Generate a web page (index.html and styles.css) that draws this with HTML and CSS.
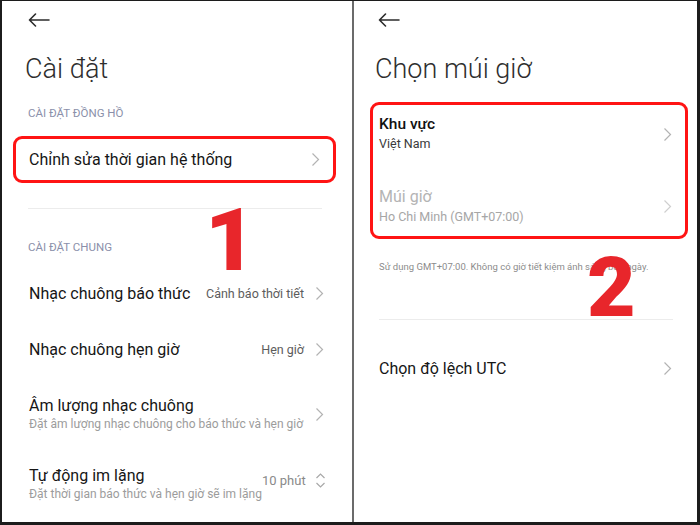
FILE: index.html
```html
<!DOCTYPE html>
<html lang="vi">
<head>
<meta charset="utf-8">
<link rel="stylesheet" href="styles.css">
</head>
<body>
<div class="frame">
  <section class="panel panel-left">
    <div class="topbar">
      <svg class="back" width="22" height="14" viewBox="0 0 22 14"><path d="M1.5 7H21M7.5 1L1.5 7L7.5 13" fill="none" stroke="#2b2b2b" stroke-width="1.6" stroke-linecap="round" stroke-linejoin="round"/></svg>
    </div>
    <h1 class="title">Cài đặt</h1>
    <div class="section-label first">CÀI ĐẶT ĐỒNG HỒ</div>
    <div class="mark-box mark-left">
      <div class="row row-boxed">
        <span class="row-title">Chỉnh sửa thời gian hệ thống</span>
        <svg class="chev" width="9" height="15" viewBox="0 0 9 15"><path d="M1.5 1.5L7.5 7.5L1.5 13.5" fill="none" stroke="#b3b3b3" stroke-width="1.2"/></svg>
      </div>
    </div>
    <div class="divider divider-left"></div>
    <div class="section-label second">CÀI ĐẶT CHUNG</div>
    <div class="list">
      <div class="row row-single">
        <span class="row-title">Nhạc chuông báo thức</span>
        <span class="row-end"><span class="row-value">Cảnh báo thời tiết</span><svg class="chev" width="9" height="15" viewBox="0 0 9 15"><path d="M1.5 1.5L7.5 7.5L1.5 13.5" fill="none" stroke="#b3b3b3" stroke-width="1.2"/></svg></span>
      </div>
      <div class="row row-single">
        <span class="row-title">Nhạc chuông hẹn giờ</span>
        <span class="row-end"><span class="row-value">Hẹn giờ</span><svg class="chev" width="9" height="15" viewBox="0 0 9 15"><path d="M1.5 1.5L7.5 7.5L1.5 13.5" fill="none" stroke="#b3b3b3" stroke-width="1.2"/></svg></span>
      </div>
      <div class="row row-double row-vol">
        <span class="row-text"><span class="row-title">Âm lượng nhạc chuông</span><span class="row-sub">Đặt âm lượng nhạc chuông cho báo thức và hẹn giờ</span></span>
        <span class="row-end"><svg class="chev" width="9" height="15" viewBox="0 0 9 15"><path d="M1.5 1.5L7.5 7.5L1.5 13.5" fill="none" stroke="#b3b3b3" stroke-width="1.2"/></svg></span>
      </div>
      <div class="row row-double row-mute">
        <span class="row-text"><span class="row-title">Tự động im lặng</span><span class="row-sub">Đặt thời gian báo thức và hẹn giờ sẽ im lặng</span></span>
        <span class="row-end"><span class="row-value muted">10 phút</span><svg class="updown" width="11" height="17" viewBox="0 0 11 17"><path d="M1.5 6L5.5 2L9.5 6M1.5 11L5.5 15L9.5 11" fill="none" stroke="#a8a8a8" stroke-width="1.2"/></svg></span>
      </div>
    </div>
    <div class="digit digit-one">1</div>
  </section>

  <section class="panel panel-right">
    <div class="topbar">
      <svg class="back" width="22" height="14" viewBox="0 0 22 14"><path d="M1.5 7H21M7.5 1L1.5 7L7.5 13" fill="none" stroke="#2b2b2b" stroke-width="1.6" stroke-linecap="round" stroke-linejoin="round"/></svg>
    </div>
    <h1 class="title">Chọn múi giờ</h1>
    <div class="mark-box mark-right">
      <div class="zone-row zone-first">
        <span class="row-text"><span class="zone-title">Khu vực</span><span class="zone-sub">Việt Nam</span></span>
        <svg class="chev" width="9" height="15" viewBox="0 0 9 15"><path d="M1.5 1.5L7.5 7.5L1.5 13.5" fill="none" stroke="#b3b3b3" stroke-width="1.2"/></svg>
      </div>
      <div class="zone-row zone-second disabled">
        <span class="row-text"><span class="zone-title">Múi giờ</span><span class="zone-sub">Ho Chi Minh (GMT+07:00)</span></span>
        <svg class="chev" width="9" height="15" viewBox="0 0 9 15"><path d="M1.5 1.5L7.5 7.5L1.5 13.5" fill="none" stroke="#cfcfcf" stroke-width="1.2"/></svg>
      </div>
    </div>
    <p class="note">Sử dụng GMT+07:00. Không có giờ tiết kiệm ánh sáng ban ngày.</p>
    <div class="divider divider-right"></div>
    <div class="row row-utc">
      <span class="row-title">Chọn độ lệch UTC</span>
      <svg class="chev" width="9" height="15" viewBox="0 0 9 15"><path d="M1.5 1.5L7.5 7.5L1.5 13.5" fill="none" stroke="#b3b3b3" stroke-width="1.2"/></svg>
    </div>
    <div class="digit digit-two">2</div>
  </section>
</div>
</body>
</html>
```

FILE: styles.css
```css
* { box-sizing: border-box; }
html, body { margin: 0; padding: 0; }
body {
  background: #1c1c1c;
  font-family: Roboto, "Noto Sans", "Liberation Sans", sans-serif;
  color: #1a1a1a;
}
.frame {
  width: 700px;
  height: 525px;
  display: flex;
  background: #fff;
  border-style: solid;
  border-color: #1c1c1c;
  border-width: 1px 3px 3px 2px;
  overflow: hidden;
}
.panel { position: relative; height: 100%; }
.panel-left { width: 350px; }
.panel-right { flex: 1; border-left: 2px solid #6b6b6b; }

.topbar { height: 37px; display: flex; align-items: center; padding-top: 1px; }
.panel-left .topbar { padding-left: 26px; }
.panel-right .topbar { padding-left: 24px; }
.back { display: block; }

.title {
  margin: 5px 0 0 0;
  height: 52px;
  display: flex;
  align-items: center;
  font-size: 27px;
  font-weight: 300;
  color: #2e2e2e;
}
.panel-left .title { padding-left: 23px; }
.panel-right .title { padding-left: 21px; }

.section-label {
  font-size: 11.5px;
  color: #8b90aa;
  padding-left: 26px;
  height: 20px;
  display: flex;
  align-items: center;
}
.section-label.first { margin-top: 8px; }
.section-label.second { margin-top: 28px; }

.mark-box {
  border: 3px solid #ff1414;
  border-radius: 9px;
}
.mark-left { margin: 13px 16px 0 11px; }
.mark-right { margin: 7px 9px 0 16px; padding: 0 13px 0 6px; }

.row {
  display: flex;
  align-items: center;
  justify-content: space-between;
  white-space: nowrap;
}
.row-title { font-size: 16px; color: #161616; }
.row-boxed { height: 41px; padding: 0 13px 0 13px; }
.chev, .updown { display: block; flex: none; }

.divider { height: 1px; background: #ececec; }
.divider-left { margin: 25px 30px 0 26px; }
.divider-right { margin: 0 24px 0 25px; }

.list { margin-top: 8px; }
.list .row { padding: 0 28px 0 27px; }
.row-single { height: 56px; }
.row-vol { height: 74px; }
.row-mute { height: 66px; }
.row-text { display: flex; flex-direction: column; white-space: nowrap; }
.row-double .row-title { line-height: 19px; }
.row-sub { font-size: 12px; color: #9c9c9c; line-height: 18px; }
.row-end { display: flex; align-items: center; gap: 11px; flex: none; }
.row-value { font-size: 12.5px; color: #5c5c5c; }
.row-value.muted { color: #8a8a8a; font-size: 13px; }
.row-mute .row-end { align-self: flex-start; margin-top: 21px; gap: 9px; }

.zone-row { display: flex; align-items: center; justify-content: space-between; }
.zone-first { height: 58px; }
.zone-second { height: 59px; margin-top: 14px; }
.zone-title { font-size: 15.5px; font-weight: 500; color: #111; line-height: 20px; }
.zone-sub { font-size: 12.5px; color: #3a3a3a; line-height: 20px; }
.disabled .zone-title { font-weight: 400; color: #b4b4b4; font-size: 16px; }
.disabled .zone-sub { color: #a6a6a6; }

.note {
  margin: 21px 0 0 0;
  padding-left: 25px;
  font-size: 9.5px;
  color: #8c8c8c;
  height: 14px;
  line-height: 14px;
  white-space: nowrap;
}
.note + .divider-right { margin-top: 45px; }

.row-utc { height: 96px; padding: 0 25px 0 25px; }

.digit {
  position: absolute;
  font-family: Roboto, "DejaVu Sans", sans-serif;
  font-weight: 900;
  color: #e8262b;
  line-height: 0.75;
}
.digit-one { font-size: 88px; left: 203px; top: 206px; }
.digit-two { font-size: 84px; left: 233px; top: 255px; }
```
